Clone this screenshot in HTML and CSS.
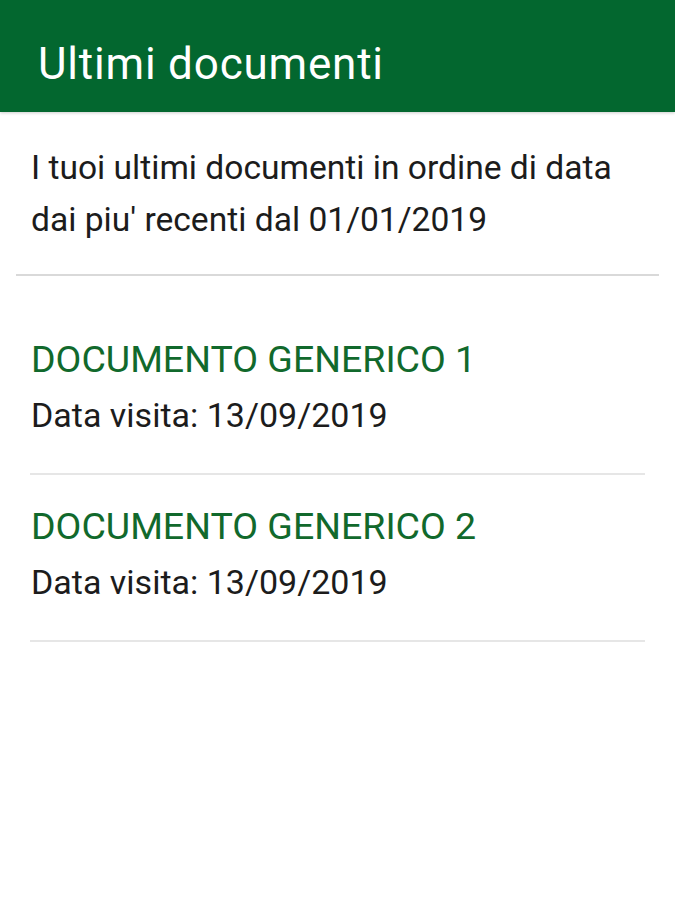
FILE: index.html
```html
<!DOCTYPE html>
<html lang="it">
<head>
  <meta charset="UTF-8" />
  <meta name="viewport" content="width=device-width, initial-scale=1.0"/>
  <title>Ultimi documenti</title>
  <link rel="stylesheet" href="styles.css">
</head>
<body>
  <header class="toolbar">
    <h1>Ultimi documenti</h1>
  </header>

  <p class="intro">I tuoi ultimi documenti in ordine di data dai piu' recenti dal 01/01/2019</p>

  <ul class="doc-list">
    <li class="doc">
      <div class="doc-title">DOCUMENTO GENERICO 1</div>
      <div class="doc-date">Data visita: 13/09/2019</div>
    </li>
    <li class="doc">
      <div class="doc-title">DOCUMENTO GENERICO 2</div>
      <div class="doc-date">Data visita: 13/09/2019</div>
    </li>
  </ul>
</body>
</html>
```

FILE: styles.css
```css
* {
  box-sizing: border-box;
}

body {
  font-family: Roboto, 'Noto Sans', sans-serif;
  background: #ffffff;
  color: #1c1c1c;
  margin: 0;
}

.toolbar {
  height: 112px;
  background: #03672f;
  padding: 36px 38px 0;
  box-shadow: 0 1px 3px rgba(0,0,0,0.2);
}

.toolbar h1 {
  margin: 0;
  color: #ffffff;
  font-size: 44px;
  font-weight: 400;
  line-height: 56px;
  letter-spacing: 0.8px;
}

.intro {
  margin: 0 16px;
  padding: 30px 15px 28px;
  font-size: 33.6px;
  line-height: 52px;
  border-bottom: 2px solid #d9d9d9;
}

.doc-list {
  list-style: none;
  margin: 0 30px;
  padding: 0;
}

.doc {
  padding: 55px 0 30px 1px;
  border-bottom: 2px solid #e6e6e6;
}

.doc + .doc {
  padding-top: 23px;
}

.doc-title {
  color: #11692c;
  font-size: 37.5px;
  line-height: 56px;
}

.doc-date {
  font-size: 34px;
  line-height: 56px;
}
```
